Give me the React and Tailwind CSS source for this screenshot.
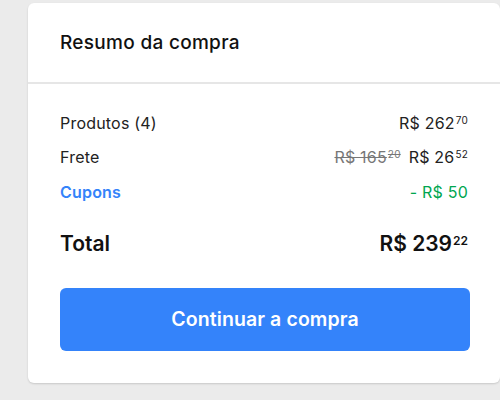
export default function App() {
  const font = { fontFamily: 'Inter, "Liberation Sans", sans-serif' };
  return (
    <div className="w-[500px] h-[400px] bg-[#ebebeb] pt-[3px] pl-[28px]" style={font}>
      <div className="w-[472px] h-[380px] bg-white rounded-[6px] shadow-[0_1px_2px_rgba(0,0,0,0.15)] flex flex-col">
        <div className="h-[81px] flex items-center pl-[32px] border-b-2 border-[#e6e6e6]">
          <span className="text-[19px] leading-[24px] tracking-[0.3px] text-[#111] font-medium">Resumo da compra</span>
        </div>
        <div className="px-[32px] pt-[27px]">
          <div className="flex justify-between h-[34px] text-[16px] leading-[24px] tracking-[0.2px] text-[#222]">
            <span>Produtos (4)</span>
            <span className="flex items-start">R$ 262<span className="text-[10px] leading-[10px] mt-[4px] ml-[1px]">70</span></span>
          </div>
          <div className="flex justify-between h-[35px] text-[16px] leading-[24px] tracking-[0.2px] text-[#222]">
            <span>Frete</span>
            <span className="flex items-start">
              <span className="flex items-start line-through text-[#777]">R$ 165<span className="text-[10px] leading-[10px] mt-[4px] ml-[1px]">20</span></span>
              <span className="flex items-start ml-[8px]">R$ 26<span className="text-[10px] leading-[10px] mt-[4px] ml-[1px]">52</span></span>
            </span>
          </div>
          <div className="flex justify-between h-[49px] text-[16px] leading-[24px] tracking-[0.2px]">
            <span className="text-[#3483fa] font-semibold">Cupons</span>
            <span className="text-[#00a650]">- R$ 50</span>
          </div>
          <div className="flex justify-between h-[30px] text-[21px] leading-[30px] text-[#111] font-semibold">
            <span>Total</span>
            <span className="flex items-start">R$ 239<span className="text-[12px] leading-[12px] mt-[6px] ml-[1px]">22</span></span>
          </div>
          <button className="mt-[29px] w-[410px] h-[63px] rounded-[6px] bg-[#3483fa] text-white text-[19.5px] tracking-[0.1px] font-semibold">
            Continuar a compra
          </button>
        </div>
      </div>
    </div>
  );
}
